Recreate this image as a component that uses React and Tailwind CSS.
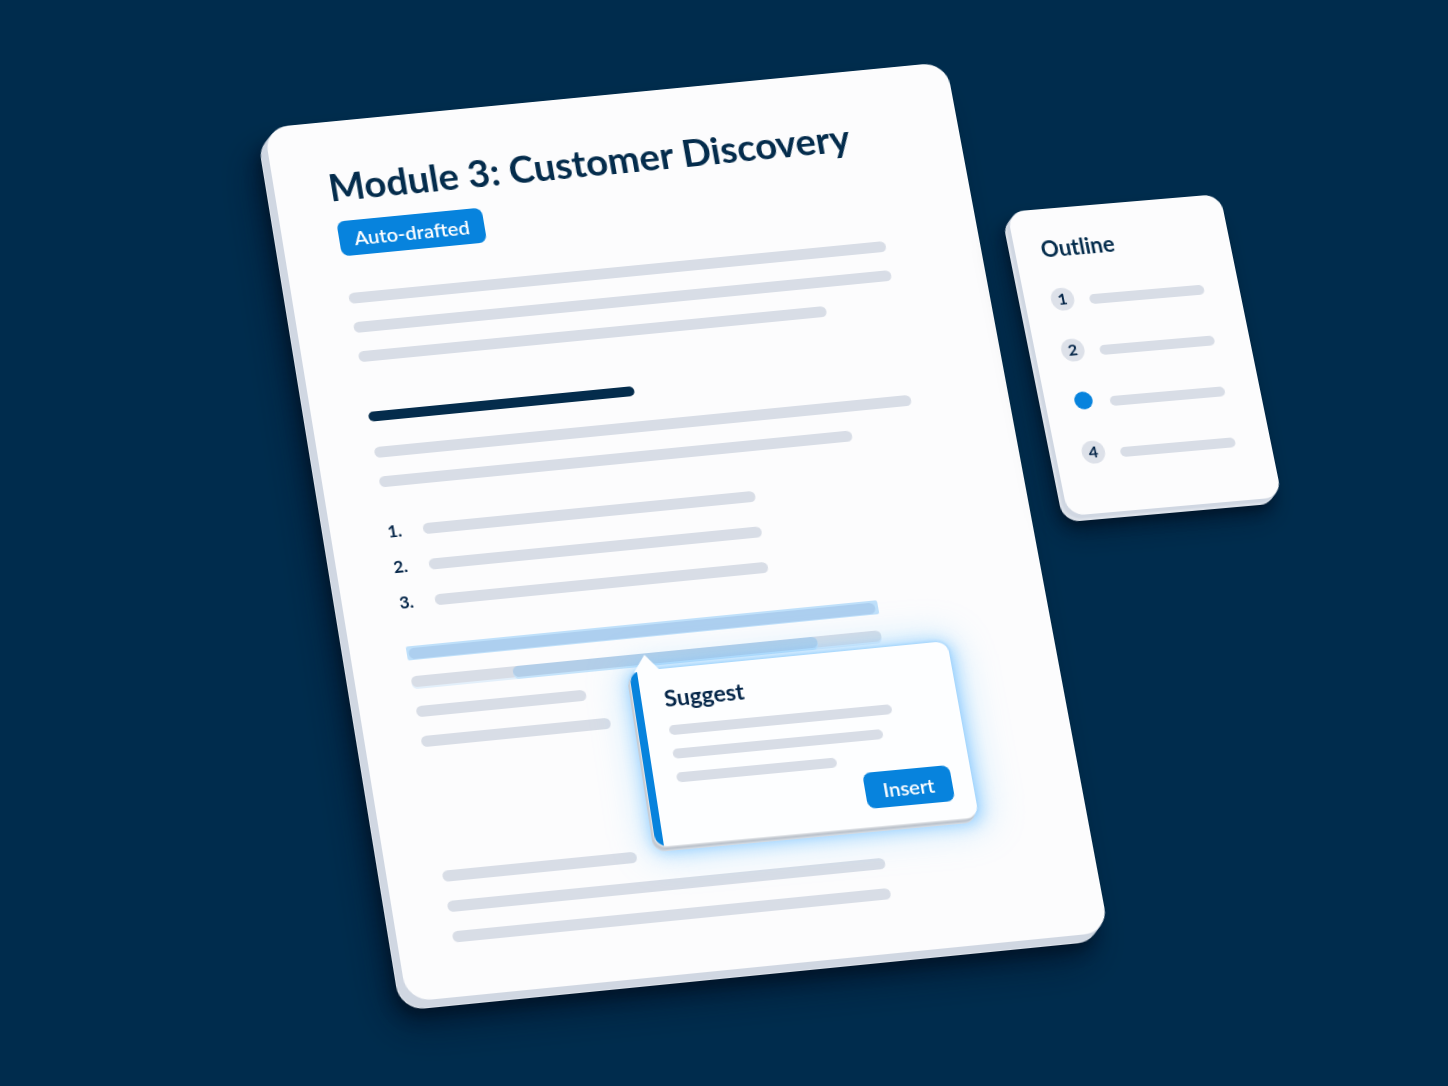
// Maps a w x h box onto a quad given as [topLeft, topRight, bottomRight, bottomLeft],
// in pixels from the box's own top left corner.
function quadTransform(w, h, [p0, p1, p2, p3]) {
  const dx1 = p1[0] - p2[0];
  const dx2 = p3[0] - p2[0];
  const dx3 = p0[0] - p1[0] + p2[0] - p3[0];
  const dy1 = p1[1] - p2[1];
  const dy2 = p3[1] - p2[1];
  const dy3 = p0[1] - p1[1] + p2[1] - p3[1];
  const det = dx1 * dy2 - dx2 * dy1;
  const g = (dx3 * dy2 - dx2 * dy3) / det;
  const k = (dx1 * dy3 - dx3 * dy1) / det;
  const m = [
    (p1[0] - p0[0] + g * p1[0]) / w, (p1[1] - p0[1] + g * p1[1]) / w, 0, g / w,
    (p3[0] - p0[0] + k * p3[0]) / h, (p3[1] - p0[1] + k * p3[1]) / h, 0, k / h,
    0, 0, 1, 0,
    p0[0], p0[1], 0, 1,
  ];
  return `matrix3d(${m.map((n) => n.toFixed(8)).join(",")})`;
}

const documentPlane = quadTransform(685, 885, [[0, 0], [682, -66], [845, 804], [143, 874]]);
const outlinePlane = quadTransform(214, 310, [[0, 0], [213, -18], [275, 285], [61, 304]]);
const popoverPlane = quadTransform(320, 178, [[0, 0], [318, -31], [350, 145], [27, 175]]);

function Line({ className }) {
  return <div className={`h-[11px] rounded-full bg-[#d8dde6] ${className}`} />;
}

function ThinLine({ className }) {
  return <div className={`h-[10px] rounded-full bg-[#d8dde6] ${className}`} />;
}

function DocumentPage() {
  return (
    <article
      style={{ transform: documentPlane }}
      className="flex min-h-[885px] w-[685px] origin-top-left flex-col rounded-[24px] bg-[#fcfcfd] px-[56px] pt-[43px] pb-[53px] shadow-[-1px_1px_0_#d0d7e2,-2px_2px_0_#d0d7e2,-3px_3px_0_#d0d7e2,-4px_4px_0_#d0d7e2,-5px_5px_0_#d0d7e2,-6px_6px_0_#d0d7e2,-7px_7px_0_#d0d7e2,-8px_8px_0_#dde2ea,-12px_16px_14px_rgba(0,14,30,0.6),-18px_26px_36px_rgba(0,14,30,0.45)]"
    >
      <h1 className="-ml-0.5 text-[38px] leading-[48px] font-bold whitespace-nowrap text-[#042c4c]">
        Module 3: Customer Discovery
      </h1>
      <span className="mt-3 flex h-9 w-[145px] items-center justify-center rounded-lg bg-[#0783dd] text-[20px] font-semibold text-white">
        Auto-drafted
      </span>

      <div className="mt-[38px] flex flex-col gap-[19px]">
        <Line className="w-[536px]" />
        <Line className="w-[536px]" />
        <Line className="w-[466px]" />
      </div>

      <div className="mt-[51px] h-[10px] w-[264px] rounded-full bg-[#042c4c]" />
      <div className="mt-[26px] flex flex-col gap-[19px]">
        <Line className="w-[533px]" />
        <Line className="w-[469px]" />
      </div>

      <ol className="mt-[33px] flex flex-col gap-3 text-[17px] font-bold text-[#042548]">
        {["1.", "2.", "3."].map((n) => (
          <li key={n} className="flex h-6 items-center">
            <span className="w-[35px]">{n}</span>
            <Line className="w-[329px]" />
          </li>
        ))}
      </ol>

      <div className="mt-8 -ml-px flex h-[14px] w-[465px] items-center rounded-[2px] bg-[#bfe0fa] pr-[3px] pl-[2px]">
        <div className="h-[11px] w-full rounded-full bg-[#adcfef]" />
      </div>
      <div className="mt-4 -ml-px flex flex-col gap-[19px]">
        <div className="h-[11px] w-[463px] rounded-full bg-[#d8dde6] pl-[100px] shadow-[0_2px_0_#e3effa]">
          <div className="h-[11px] w-[300px] rounded-full bg-[#b3cee8] shadow-[0_2px_0_#c6e4fb]" />
        </div>
        <Line className="w-[167px]" />
        <Line className="w-[186px]" />
      </div>

      <div className="mt-[123px] -ml-0.5 flex flex-col gap-[19px]">
        <Line className="w-[190px]" />
        <Line className="w-[428px]" />
        <Line className="w-[428px]" />
      </div>
    </article>
  );
}

function SuggestPopover() {
  return (
    <aside
      aria-labelledby="suggest-title"
      style={{ transform: popoverPlane }}
      className="absolute top-[544px] left-[365px] w-[320px] origin-top-left rounded-[12px] bg-[#fdfeff] shadow-[-1px_1px_0_#dfe2e6,-2px_2px_0_#c9ced5,-2px_3px_0_#bcc3cc,-3px_4px_0_#c5ccd5,-3px_5px_0_#d2d9e1,0_0_3px_1px_#a5d5fc,0_3px_14px_4px_rgba(90,180,255,0.5),0_2px_34px_10px_rgba(130,205,255,0.35)]"
    >
      <svg viewBox="0 0 26 17" aria-hidden="true" className="absolute -top-4 left-[5px] h-[17px] w-[26px]">
        <path d="M0 17 13 0l13 17z" fill="#fdfeff" />
      </svg>
      <div className="flex h-[178px] overflow-hidden rounded-[12px]">
        <div className="w-2 bg-[#0783dd]" />
        <div className="flex grow flex-col pt-4 pr-5 pb-[18px] pl-[23px]">
          <h2 id="suggest-title" className="text-[23px] leading-[28px] font-bold text-[#042548]">
            Suggest
          </h2>
          <div className="mt-[14px] flex flex-col gap-[14px]">
            <ThinLine className="w-[223px]" />
            <ThinLine className="w-[210px]" />
            <ThinLine className="w-[160px]" />
          </div>
          <button
            type="button"
            className="mt-auto flex h-9 w-[86px] shrink-0 items-center justify-center self-end rounded-lg bg-[#0783dd] text-[20px] font-semibold text-white"
          >
            Insert
          </button>
        </div>
      </div>
    </aside>
  );
}

function OutlineCard() {
  return (
    <nav
      aria-labelledby="outline-title"
      style={{ transform: outlinePlane }}
      className="mt-[84px] h-[310px] w-[214px] shrink-0 origin-top-left rounded-[17px] bg-[#fcfcfd] px-[26px] pt-[27px] shadow-[-1px_1px_0_#d0d7e2,-2px_2px_0_#d0d7e2,-3px_3px_0_#d0d7e2,-4px_4px_0_#d6dce6,-5px_5px_0_#dde2ea,-6px_6px_0_#dde2ea,-8px_12px_12px_rgba(0,14,30,0.6),-12px_18px_28px_rgba(0,14,30,0.4)]"
    >
      <h2 id="outline-title" className="text-[22px] leading-[28px] font-bold text-[#042c4c]">
        Outline
      </h2>
      <ol className="mt-[25px] flex flex-col gap-[28px] text-[16px] font-bold text-[#042548]">
        {[1, 2, 3, 4].map((n) => (
          <li key={n} className="flex h-6 items-center gap-[15px]">
            {n === 3 ? (
              <span className="flex size-[23px] items-center justify-center">
                <span className="size-[18px] rounded-full bg-[#0783dd]" />
              </span>
            ) : (
              <span className="flex size-[23px] items-center justify-center rounded-full bg-[#dde1e9]">{n}</span>
            )}
            <ThinLine className="mt-1.5 w-[115px]" />
          </li>
        ))}
      </ol>
    </nav>
  );
}

export default function App() {
  return (
    <main className="flex min-h-screen items-start justify-center gap-[58px] overflow-hidden bg-[#002c4d] pt-32 pl-9 font-['Lato',sans-serif]">
      <div className="relative shrink-0">
        <DocumentPage />
        <SuggestPopover />
      </div>
      <OutlineCard />
    </main>
  );
}
